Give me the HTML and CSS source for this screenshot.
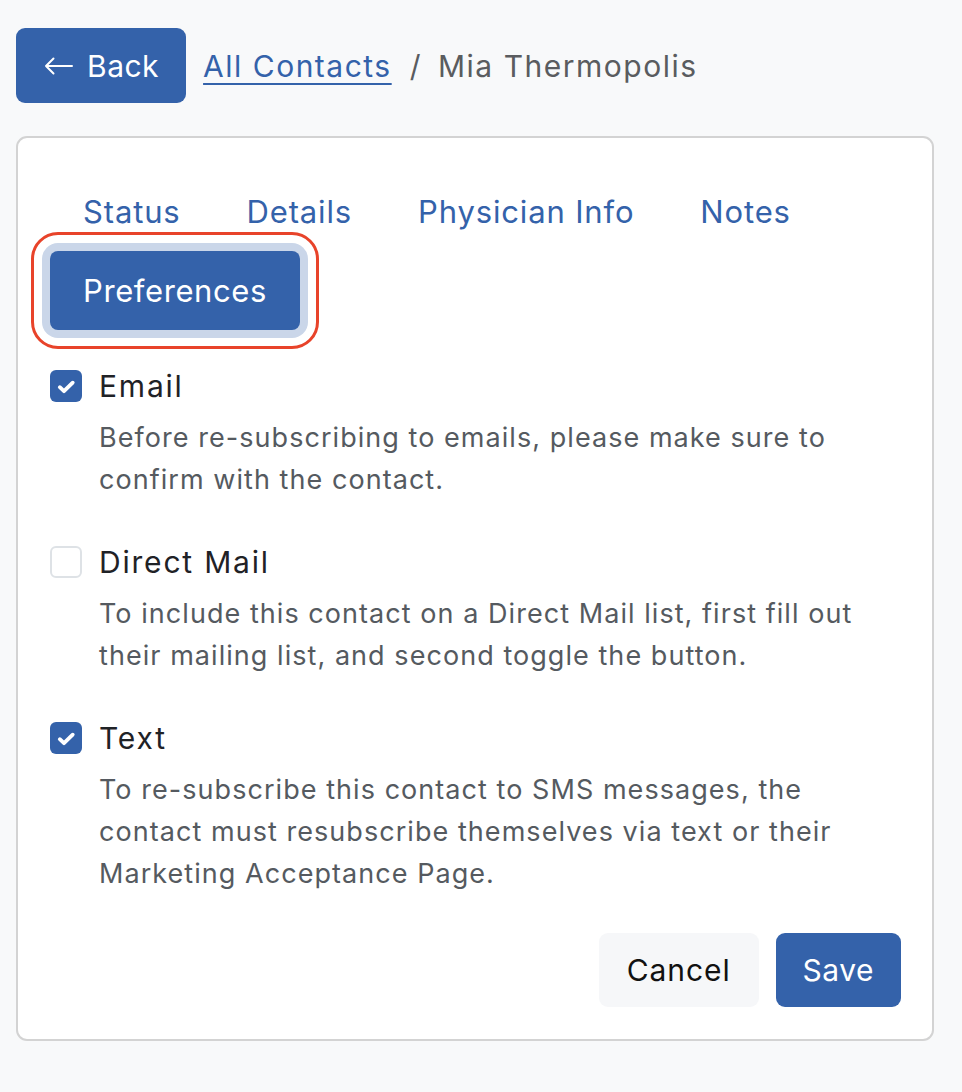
FILE: index.html
```html
<!DOCTYPE html>
<html lang="en">
<head>
<meta charset="utf-8">
<title>Mia Thermopolis</title>
<link rel="stylesheet" href="styles.css">
</head>
<body>
<div class="page">
  <header class="header">
    <button class="back-btn" type="button">
      <svg class="back-arrow" width="29" height="18" viewBox="0 0 29 18" aria-hidden="true">
        <path d="M28 9H2M9.5 1.5L2 9l7.5 7.5" fill="none" stroke="#fff" stroke-width="2" stroke-linecap="round" stroke-linejoin="round"/>
      </svg>
      <span>Back</span>
    </button>
    <nav class="crumbs">
      <a class="crumb-link" href="#">All Contacts</a>
      <span class="crumb-sep">/</span>
      <span class="crumb-current">Mia Thermopolis</span>
    </nav>
  </header>

  <section class="card">
    <div class="tabs">
      <div class="tab">Status</div>
      <div class="tab">Details</div>
      <div class="tab">Physician Info</div>
      <div class="tab">Notes</div>
      <div class="tab tab-active">Preferences</div>
    </div>

    <div class="prefs">
      <div class="pref">
        <div class="pref-head">
          <span class="box box-checked">
            <svg width="32" height="32" viewBox="0 0 32 32" aria-hidden="true"><path d="M9.8 17.2l4.2 4 8.7-8.5" fill="none" stroke="#fff" stroke-width="3.8" stroke-linecap="round" stroke-linejoin="round"/></svg>
          </span>
          <span class="pref-label">Email</span>
        </div>
        <p class="pref-desc">Before re-subscribing to emails, please make sure to confirm with the contact.</p>
      </div>

      <div class="pref">
        <div class="pref-head">
          <span class="box"></span>
          <span class="pref-label">Direct Mail</span>
        </div>
        <p class="pref-desc">To include this contact on a Direct Mail list, first fill out their mailing list, and second toggle the button.</p>
      </div>

      <div class="pref">
        <div class="pref-head">
          <span class="box box-checked">
            <svg width="32" height="32" viewBox="0 0 32 32" aria-hidden="true"><path d="M9.8 17.2l4.2 4 8.7-8.5" fill="none" stroke="#fff" stroke-width="3.8" stroke-linecap="round" stroke-linejoin="round"/></svg>
          </span>
          <span class="pref-label">Text</span>
        </div>
        <p class="pref-desc">To re-subscribe this contact to SMS messages, the contact must resubscribe themselves via text or their Marketing Acceptance Page.</p>
      </div>
    </div>

    <div class="actions">
      <button class="btn btn-cancel" type="button">Cancel</button>
      <button class="btn btn-save" type="button">Save</button>
    </div>
  </section>
</div>
</body>
</html>
```
FILE: styles.css
```css
* { box-sizing: border-box; }

html, body {
  margin: 0;
  padding: 0;
  background: #f8f9fa;
}

body {
  font-family: "Inter", "Open Sans", sans-serif;
  color: #212529;
}

.page {
  padding: 28px 28px 0 16px;
}

.header {
  display: flex;
  align-items: center;
  height: 75px;
}

.back-btn {
  display: flex;
  align-items: center;
  gap: 14px;
  height: 75px;
  padding: 0 27px 0 28px;
  border: 0;
  border-radius: 9px;
  background: #3462aa;
  color: #fff;
  font-family: inherit;
  font-size: 30px;
  letter-spacing: 0.5px;
  cursor: pointer;
}

.back-arrow { display: block; }

.crumbs {
  margin-left: 17px;
  display: flex;
  align-items: center;
  font-size: 30px;
  letter-spacing: 1.5px;
}

.crumb-link {
  color: #3462aa;
  text-decoration: underline;
  text-decoration-thickness: 2px;
  text-underline-offset: 6px;
}

.crumb-sep {
  margin: 0 16px 0 18px;
  color: #5a5c5f;
}

.crumb-current {
  color: #5a5c5f;
}

.card {
  margin-top: 33px;
  width: 918px;
  background: #fff;
  border: 2px solid #d3d3d3;
  border-radius: 11px;
  padding: 34px 31px 32px 32px;
}

.tabs {
  display: flex;
  flex-wrap: wrap;
}

.tab {
  height: 79px;
  display: flex;
  align-items: center;
  padding: 0 33px;
  color: #3462aa;
  font-size: 31px;
  letter-spacing: 0.85px;
  border-radius: 8px;
}

.tab-active {
  background: #3462aa;
  color: #fff;
  letter-spacing: 0.6px;
  box-shadow: 0 0 0 8px #cad6e9;
  outline: 3px solid #e8432a;
  outline-offset: 16px;
}

.prefs {
  margin-top: 35px;
  display: flex;
  flex-direction: column;
  gap: 40px;
}

.pref-head {
  display: flex;
  align-items: center;
  gap: 17px;
  height: 42px;
}

.box {
  width: 32px;
  height: 32px;
  flex: none;
  border-radius: 6px;
  border: 2px solid #dee2e6;
  background: #fff;
}

.box-checked {
  border: 0;
  background: #3462aa;
}

.box svg { display: block; }

.pref-label {
  font-size: 30px;
  letter-spacing: 1.8px;
  color: #1f2226;
}

.pref-desc {
  margin: 10px 0 0 49px;
  font-size: 27px;
  line-height: 42px;
  letter-spacing: 1.05px;
  color: #555a60;
}

.actions {
  margin-top: 38px;
  display: flex;
  justify-content: flex-end;
  gap: 17px;
}

.btn {
  height: 74px;
  padding: 0 27px;
  border: 0;
  border-radius: 9px;
  font-family: inherit;
  font-size: 30px;
  cursor: pointer;
}

.btn-cancel {
  padding: 0 28px;
  letter-spacing: 0.9px;
  background: #f6f7f9;
  color: #111;
}

.btn-save {
  letter-spacing: 0.5px;
  background: #3462aa;
  color: #fff;
}
```
